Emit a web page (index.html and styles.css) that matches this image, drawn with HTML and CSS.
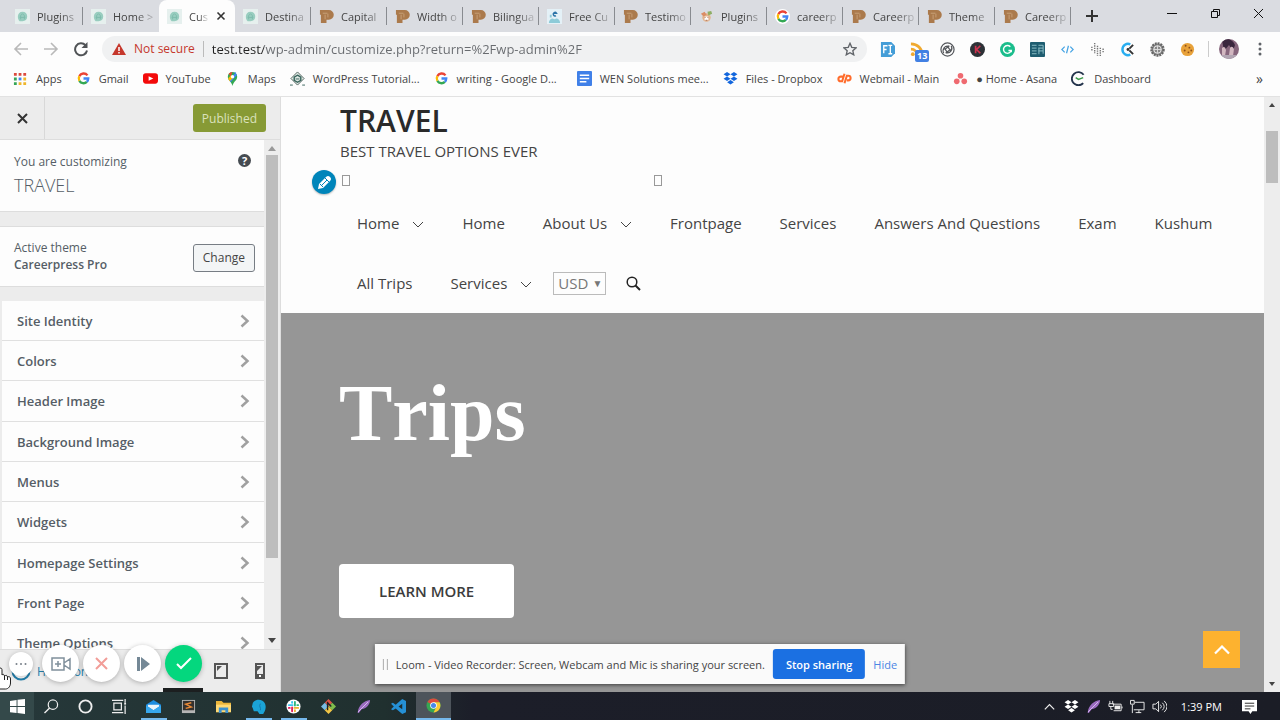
FILE: index.html
```html
<!DOCTYPE html>
<html lang="en">
<head>
<meta charset="utf-8">
<meta name="viewport" content="width=device-width, initial-scale=1">
<title>Customize: TRAVEL</title>
<link rel="stylesheet" href="styles.css">
</head>
<body>
<svg class="defs" aria-hidden="true">
  <symbol id="leaf" viewBox="0 0 16 16"><path fill="#e6f0ee" d="M0 0h16v16H0z"/><path fill="#98cdbf" d="M8 3c3 0 5 2 5 5 0 3-2 5-5 5H5C2 11 2 3 8 3z"/><path stroke="#7dbcac" fill="none" d="M6 11V7l2-2 2 2v4M5 9h6"/></symbol>
  <symbol id="press" viewBox="0 0 16 16"><path fill="#ab7a4c" d="M1 1h9.500a5 5 0 0 1 0 10.500H8V15H2V6H1z"/><path fill="none" stroke="#c9a17a" d="M4 4.500h5M6.500 6v5M9.500 5v4"/></symbol>
  <symbol id="google" viewBox="-1.500 -1.500 19 19"><g fill="none" stroke-width="3"><path stroke="#ea4335" d="M13 4A6 6 0 0 0 2.800 5"/><path stroke="#fbbc05" d="M2.800 5a6 6 0 0 0 0 6"/><path stroke="#34a853" d="M2.800 11a6 6 0 0 0 9.400 1.300"/><path stroke="#4285f4" d="M12.200 12.300A6 6 0 0 0 14 8H8"/></g></symbol>
  <symbol id="dropbox" viewBox="0 0 16 16"><path d="M4.300 1 8 3.400 4.300 5.800.6 3.400zM11.700 1l3.700 2.400-3.700 2.400L8 3.400zM4.300 5.800 8 8.200l-3.700 2.400L.6 8.200zM11.700 5.800l3.700 2.400-3.700 2.400L8 8.200zM8 9.600l3.600 2.400L8 14.400 4.400 12z"/></symbol>
  <symbol id="feather" viewBox="0 0 16 16"><path fill="#9b6cc0" d="M2 13C3 7 8 2 15 1c0 4-3 9-9 10l-3 4-1 0z"/><path stroke="#d9bdf0" d="M2 14 13 3"/></symbol>
  <symbol id="next" viewBox="0 0 12 16"><path fill="none" stroke="#a0a0a0" stroke-width="2.500" d="m2.500 2.500 6 5.500-6 5.500"/></symbol>
  <symbol id="down" viewBox="0 0 12 12"><path fill="none" stroke="#444" d="m1 5 5 5 5-5"/></symbol>
</svg>
<div class="screen">
  <header class="browser">
    <div class="tabstrip">
      <div class="tabs">
        <button class="tab"><svg class="fav"><use href="#leaf"/></svg><span>Plugins</span></button>
        <button class="tab plain"><svg class="fav"><use href="#leaf"/></svg><span>Home &gt;</span></button>
        <button class="tab active"><svg class="fav"><use href="#leaf"/></svg><span>Cus</span><svg class="close" viewBox="0 0 10 10"><path stroke="#333" stroke-width="1.600" d="m1.500 1.500 7 7m0-7-7 7"/></svg></button>
        <button class="tab"><svg class="fav"><use href="#leaf"/></svg><span>Destina</span></button>
        <button class="tab"><svg class="fav"><use href="#press"/></svg><span>Capital</span></button>
        <button class="tab"><svg class="fav"><use href="#press"/></svg><span>Width o</span></button>
        <button class="tab"><svg class="fav"><use href="#press"/></svg><span>Bilingua</span></button>
        <button class="tab"><svg class="fav" viewBox="0 0 16 16"><path fill="#e4f1f7" d="M0 0h16v16H0z"/><path fill="none" stroke="#2b74a8" stroke-width="1.600" d="M6.500 4.500H10a1.800 1.800 0 1 0-.5 2.500"/><path fill="#8ecbd8" d="M2 15c0-3 2-5 4-5l2 1 2-1c2 0 4 2 4 5zM3 6h2v3H3z"/></svg><span>Free Cu</span></button>
        <button class="tab"><svg class="fav"><use href="#press"/></svg><span>Testimo</span></button>
        <button class="tab"><svg class="fav" viewBox="0 0 16 16"><circle cx="8" cy="9" r="4.500" fill="#e3b48c"/><path fill="#db8d65" d="m2 5 4-2 2 3-3 2z"/><path fill="#8dae63" d="m9 3 4-1 1 3-4 2z"/><path fill="#fff" d="M6 8h4v4H6z"/><path stroke="#a86c53" d="M6 9h1m2 0h1m-3 3h2"/></svg><span>Plugins</span></button>
        <button class="tab"><svg class="fav round"><use href="#google"/></svg><span>careerp</span></button>
        <button class="tab"><svg class="fav"><use href="#press"/></svg><span>Careerp</span></button>
        <button class="tab"><svg class="fav"><use href="#press"/></svg><span>Theme</span></button>
        <button class="tab"><svg class="fav"><use href="#press"/></svg><span>Careerp</span></button>
      </div>
      <button class="newtab" aria-label="New tab"><svg width="12" height="12" viewBox="0 0 12 12"><path stroke="#333" stroke-width="2" d="M6 0v12M0 6h12"/></svg></button>
      <div class="window">
        <button aria-label="Minimize"><svg width="11" height="11" viewBox="0 0 11 11"><path stroke="#111" d="M0 5.500h10"/></svg></button>
        <button aria-label="Restore"><svg width="11" height="11" viewBox="0 0 11 11"><path fill="none" stroke="#111" d="M1.500 3.500h6v6h-6zM3.500 3.500v-2h6v6h-2"/></svg></button>
        <button aria-label="Close"><svg width="11" height="11" viewBox="0 0 11 11"><path stroke="#111" d="m1 1 9 9m0-9-9 9"/></svg></button>
      </div>
    </div>
    <div class="toolbar">
      <div class="history">
        <button aria-label="Back"><svg width="16" height="16" viewBox="0 0 16 16"><path fill="none" stroke="#b9b9b9" stroke-width="1.600" d="M15 8H2m6-6L2 8l6 6"/></svg></button>
        <button aria-label="Forward"><svg width="16" height="16" viewBox="0 0 16 16"><path fill="none" stroke="#b9b9b9" stroke-width="1.600" d="M1 8h13M8 2l6 6-6 6"/></svg></button>
        <button aria-label="Reload"><svg width="16" height="16" viewBox="0 0 16 16"><path fill="none" stroke="#505356" stroke-width="2" d="M12.500 4.200A6 6 0 1 0 14 9.500"/><path fill="#505356" d="M14.500 1v6h-6z"/></svg></button>
      </div>
      <div class="address">
        <svg width="14" height="14" viewBox="0 0 14 14"><path fill="#c5372c" d="m7 1 7 12H0z"/><path stroke="#fff" stroke-width="1.500" d="M7 5v4m0 1v1.500"/></svg>
        <span class="unsafe">Not secure</span>
        <input class="url" aria-label="Address" value="test.test/wp-admin/customize.php?return=%2Fwp-admin%2F">
        <svg width="14" height="14" viewBox="0 0 16 16"><path fill="none" stroke="#5f6368" stroke-width="1.500" d="m8 1.500 2 4.600 5 .5-3.800 3.300 1.100 4.800L8 12.200l-4.300 2.500 1.100-4.800L1 6.600l5-.5z"/></svg>
      </div>
      <div class="extensions">
        <button aria-label="Font identifier"><svg viewBox="0 0 16 16"><path fill="#449dd7" d="M1 0h11l4 4v8l-4 4H1z"/><path fill="none" stroke="#fff" stroke-width="1.400" d="M4 12V4h4M4 8h3M9 3.500h4M9 12.500h4M11 3.500v9"/></svg></button>
        <button class="feed" aria-label="Feeds, 13 new"><svg viewBox="0 0 16 16"><g fill="none" stroke="#f0a92f" stroke-width="3"><path d="M1 2c7 0 12 5 12 12M1 7.500c4 0 6.500 3 6.500 6.500"/></g><circle cx="3" cy="13" r="2" fill="#f0a92f"/></svg><b>13</b></button>
        <button aria-label="Knot"><svg viewBox="0 0 16 16"><g fill="none" stroke="#55585c" stroke-width="1.300"><circle cx="8" cy="8" r="7"/><path d="M4 12c-2-4 1-9 6-7M12 4c2 4-1 9-6 7M5 8l5-4M6 12l5-4M8 5l4 5M4 6l4 5"/></g></svg></button>
        <button aria-label="Keywords"><svg viewBox="0 0 16 16"><circle cx="8" cy="8" r="8" fill="#2d3136"/><path stroke="#cf3350" stroke-width="1.800" fill="none" d="M6 4v8m5-8L7 8l4 4"/></svg></button>
        <button aria-label="Grammar"><svg viewBox="0 0 16 16"><circle cx="8" cy="8" r="8" fill="#1bbd8c"/><path fill="none" stroke="#fff" stroke-width="1.500" d="M11 5a4.200 4.200 0 1 0 1 4H9m3 0v2"/></svg></button>
        <button aria-label="Reader"><svg viewBox="0 0 16 16"><rect width="16" height="16" rx="1" fill="#1f5d70"/><path fill="none" stroke="#8fc1c9" d="M2 3.500h5M2 6.500h5M2 9.500h5M2 12.500h5M9 3.500h5v9M9 6.500h5M9 9.500h5M9.500 6v7"/></svg></button>
        <button aria-label="Source"><svg viewBox="0 0 16 16"><path fill="none" stroke="#46a4e4" stroke-width="1.300" d="M5 5 2 8l3 3m6-6 3 3-3 3M9 4l-2 8"/></svg></button>
        <button aria-label="Page dots"><svg viewBox="0 0 16 16"><g stroke="#777" stroke-width="1.500" stroke-dasharray="1.500 1"><path d="M2 5v5M5 1v11M8 4v11M11 6v9M14 7v5"/></g></svg></button>
        <button aria-label="Clock"><svg viewBox="0 0 16 16"><path fill="none" stroke="#2aaef0" stroke-width="2.600" d="M11 2.500A6 6 0 1 0 11 13.500"/><circle cx="8.500" cy="8" r="1.500" fill="#333"/><path stroke="#333" stroke-width="2" d="m10 7 4-4m-4 6 4 4"/></svg></button>
        <button aria-label="Settings"><svg viewBox="0 0 16 16"><circle cx="8" cy="8" r="6.500" fill="#888" stroke="#666" stroke-width="2.500" stroke-dasharray="2 1"/><circle cx="8" cy="8" r="4" fill="none" stroke="#eee"/><path stroke="#ddd" d="M8 4v8M4 8h8"/></svg></button>
        <button aria-label="Cookies"><svg viewBox="0 0 16 16"><circle cx="8" cy="8" r="7" fill="#e8a23a"/><g fill="#8c4d1a"><circle cx="6" cy="4" r="1"/><circle cx="10" cy="6" r="1"/><circle cx="5" cy="9" r="1"/><circle cx="9" cy="11" r="1"/><circle cx="12" cy="9" r="1"/></g></svg></button>
      </div>
      <div class="profile">
        <button aria-label="Profile"><svg width="20" height="20" viewBox="0 0 20 20"><clipPath id="face"><circle cx="10" cy="10" r="10"/></clipPath><g clip-path="url(#face)"><path fill="#86657c" d="M0 0h20v20H0z"/><path fill="#39263d" d="M3 1c5-3 11 0 13 5l-2 6-4-6-5 6z"/><path fill="#d2b7c0" d="M3 9q3-3 4 2l-1 6H3zM11 9q2-3 4 1l-1 7-4-1z"/><path fill="#b1a5b2" d="M0 16h20v4H0z"/></g></svg></button>
        <button aria-label="Menu"><svg width="4" height="16" viewBox="0 0 4 16"><g fill="#5f6368"><circle cx="2" cy="3" r="1.500"/><circle cx="2" cy="8" r="1.500"/><circle cx="2" cy="13" r="1.500"/></g></svg></button>
      </div>
    </div>
    <nav class="bookmarks">
      <a href="#"><svg viewBox="0 0 16 16"><path fill="#dc4a3d" d="M1 2h3v3H1zM6 2h3v3H6zM11 2h3v3h-3z"/><path fill="#35a556" d="M1 7h3v3H1zM1 12h3v3H1z"/><path fill="#4285e8" d="M6 7h3v3H6z"/><path fill="#efb62b" d="M11 7h3v3h-3zM6 12h3v3H6zM11 12h3v3h-3z"/></svg>Apps</a>
      <a href="#"><svg><use href="#google"/></svg>Gmail</a>
      <a href="#"><svg viewBox="0 0 16 16"><rect y="2.500" width="16" height="11" rx="3" fill="#f30a0a"/><path fill="#fff" d="m6 5.500 5 2.500-5 2.500z"/></svg>YouTube</a>
      <a href="#"><svg viewBox="0 0 16 16"><path fill="#34a853" d="M3 6a5 5 0 0 1 10 0c0 4-4 5-5 10-1-5-5-6-5-10z"/><path fill="#4285f4" d="M8 1a5 5 0 0 1 4.700 3.300L6 12 4 9l8-8z"/><path fill="#ea4335" d="M4 3a5 5 0 0 1 4-2L6 6z"/><path fill="#fbbc05" d="m3.300 8 3-3.500L9 7l-4 4z"/><circle cx="8" cy="6" r="1.800" fill="#fff"/></svg>Maps</a>
      <a href="#"><svg viewBox="0 0 16 16"><path fill="#dfe9e4" stroke="#50615c" d="m8 1 7 7-7 7-7-7z"/><path fill="none" stroke="#37635b" stroke-width="1.500" d="m8 4.500 3.500 2v3.500L8 12l-3.500-2V6.500z"/><path stroke="#37635b" d="M6 8.500h4M0 15h3m10 0h3"/></svg>WordPress Tutorial...</a>
      <a href="#" class="wide"><svg><use href="#google"/></svg>writing - Google D...</a>
      <a href="#"><svg viewBox="0 0 16 16"><rect width="16" height="16" rx="1" fill="#4080e8"/><path stroke="#fff" stroke-width="1.600" d="M3 4.500h10M3 8h10M3 11.500h7"/></svg>WEN Solutions mee...</a>
      <a href="#"><svg class="blue"><use href="#dropbox"/></svg>Files - Dropbox</a>
      <a href="#"><svg viewBox="0 0 16 16"><path fill="none" stroke="#ff6c2c" stroke-width="2.200" d="M6.500 6H4a2.500 2.500 0 0 0 0 5h1.500L8 3M8 13l2.500-8H12a2.500 2.500 0 0 1 0 5h-1.500"/></svg>Webmail - Main</a>
      <a href="#"><svg viewBox="0 0 16 16"><g fill="#ef6a70"><circle cx="8" cy="5" r="3"/><circle cx="4" cy="11" r="3"/><circle cx="12" cy="11" r="3"/></g></svg>● Home - Asana</a>
      <a href="#"><svg viewBox="0 0 16 16"><path fill="none" stroke="#24344c" stroke-width="2" d="M13.500 4A7 7 0 1 0 13 13"/><path fill="none" stroke="#3d9a4a" stroke-width="1.500" d="m5 7 3 2 5-2"/></svg>Dashboard</a>
      <button class="more" aria-label="More bookmarks">»</button>
    </nav>
  </header>

  <main class="work">
    <aside class="customizer">
      <div class="head">
        <button class="exit" aria-label="Close"><svg width="11" height="11" viewBox="0 0 11 11"><path stroke="#333" stroke-width="2" d="m1 1 9 9m0-9-9 9"/></svg></button>
        <button class="published">Published</button>
      </div>
      <div class="pane">
        <div class="panels">
          <section class="intro">
            <div><p>You are customizing</p><h2>TRAVEL</h2></div>
            <button class="help" aria-label="Help">?</button>
          </section>
          <section class="theme">
            <div><p>Active theme</p><h3>Careerpress Pro</h3></div>
            <button class="change">Change</button>
          </section>
          <div class="sections">
            <button>Site Identity<svg><use href="#next"/></svg></button>
            <button>Colors<svg><use href="#next"/></svg></button>
            <button>Header Image<svg><use href="#next"/></svg></button>
            <button>Background Image<svg><use href="#next"/></svg></button>
            <button>Menus<svg><use href="#next"/></svg></button>
            <button>Widgets<svg><use href="#next"/></svg></button>
            <button>Homepage Settings<svg><use href="#next"/></svg></button>
            <button>Front Page<svg><use href="#next"/></svg></button>
            <button>Theme Options<svg><use href="#next"/></svg></button>
          </div>
        </div>
        <div class="scroll dim"><svg width="8" height="5" viewBox="0 0 8 5"><path fill="#999" d="M4 0 8 5H0z"/></svg><i></i><svg width="8" height="5" viewBox="0 0 8 5"><path fill="#444" d="m4 5 4-5H0z"/></svg></div>
      </div>
      <div class="foot">
        <button class="collapse"><svg width="20" height="20" viewBox="0 0 20 20"><circle cx="10" cy="10" r="8.500" fill="#fff" stroke="#2480ad" stroke-width="2"/><path fill="#0b6799" d="M5 10h10l-2 4H7z"/></svg>Hide Controls</button>
        <div class="devices">
          <button aria-label="Tablet"><svg width="14" height="16" viewBox="0 0 14 16"><path fill="none" stroke="#555" stroke-width="2" d="M1 1h12v14H1z"/><path fill="#555" d="M3 3h5L3 8z"/></svg></button>
          <button aria-label="Mobile"><svg width="10" height="16" viewBox="0 0 10 16"><path fill="none" stroke="#555" stroke-width="2" d="M1 1h8v14H1z"/><path fill="#555" d="M2 3h5L2 8zM1 11h8v4H1z"/><path fill="#fff" d="M4 12h2v2H4z"/></svg></button>
        </div>
      </div>
      <div class="recorder">
        <button class="dots" aria-label="Options"><svg width="12" height="4" viewBox="0 0 12 4"><g fill="#777f88"><circle cx="1.500" cy="2" r="1"/><circle cx="6" cy="2" r="1"/><circle cx="10.500" cy="2" r="1"/></g></svg></button>
        <button aria-label="Camera"><svg width="20" height="14" viewBox="0 0 20 14"><path fill="none" stroke="#80909c" stroke-width="1.500" d="M1 1h12v12H1zM13 6l6-4v10l-6-4M4 7h6M7 4v6"/></svg></button>
        <button aria-label="Cancel"><svg width="13" height="13" viewBox="0 0 13 13"><path stroke="#f29d98" stroke-width="2" d="m1 1 11 11m0-11L1 12"/></svg></button>
        <button aria-label="Resume"><svg width="14" height="14" viewBox="0 0 14 14"><path fill="#748896" d="M1 0h3v14H1zM5 0l9 7-9 7z"/></svg></button>
        <button class="done" aria-label="Finish"><svg width="16" height="13" viewBox="0 0 16 13"><path fill="none" stroke="#fff" stroke-width="2" d="m1 7 4 4L15 1"/></svg></button>
      </div>
      <div class="tip"></div>
      <svg class="hand" viewBox="0 0 12 23"><path fill="#fff" stroke="#222" d="M0 1c2 0 2 1 2 3v4c1-1 2-1 2.500 1C6 8 7 8 7.500 10c2-1 3 0 3 2v4c0 3-2 6-5 6H0"/><path stroke="#222" d="M4.500 9v4M7.500 10v3"/></svg>
    </aside>

    <div class="preview">
      <div class="site">
        <header class="masthead">
          <h1>TRAVEL</h1>
          <p>BEST TRAVEL OPTIONS EVER</p>
          <div class="social"><i></i><i></i>
            <button class="edit" aria-label="Edit menu"><svg width="15" height="15" viewBox="0 0 15 15"><path fill="#fff" d="m1 14 1-5 7-7q2-2 4 0t0 4l-7 7z"/><path stroke="#0085ba" fill="none" d="m8 3 4 4M3 9l3 3M5 10l5-5"/></svg></button>
          </div>
          <nav class="menu">
            <a href="#">Home<svg><use href="#down"/></svg></a>
            <a href="#">Home</a>
            <a href="#">About Us<svg><use href="#down"/></svg></a>
            <a href="#">Frontpage</a>
            <a href="#">Services</a>
            <a href="#">Answers And Questions</a>
            <a href="#">Exam</a>
            <a href="#">Kushum</a>
            <a href="#">All Trips</a>
            <a href="#">Services<svg><use href="#down"/></svg></a>
            <div class="tools">
              <div class="currency"><select aria-label="Currency"><option>USD</option></select></div>
              <button aria-label="Search"><svg width="15" height="15" viewBox="0 0 15 15"><circle cx="6" cy="6" r="4.800" fill="none" stroke="#222" stroke-width="1.500"/><path stroke="#222" stroke-width="2" d="m9.500 9.500 4.500 4.500"/></svg></button>
            </div>
          </nav>
        </header>
        <section class="hero">
          <h2>Trips</h2>
          <a class="learn" href="#">LEARN MORE</a>
        </section>
        <button class="top" aria-label="Back to top"><svg width="16" height="10" viewBox="0 0 16 10"><path fill="none" stroke="#fff" stroke-width="2.200" d="m1 8.500 7-7 7 7"/></svg></button>
      </div>
      <div class="scroll page"><svg width="6" height="4" viewBox="0 0 6 4"><path fill="#444" d="m3 0 3 4H0z"/></svg><i></i><svg width="6" height="4" viewBox="0 0 6 4"><path fill="#444" d="m3 4 3-4H0z"/></svg></div>
    </div>
    <div class="sharing">
      <span class="grip"></span>
      <p>Loom - Video Recorder: Screen, Webcam and Mic is sharing your screen.</p>
      <button class="stop">Stop sharing</button>
      <a href="#">Hide</a>
    </div>
  </main>

  <footer class="taskbar">
    <div class="apps">
      <button class="sys start" aria-label="Start"><svg viewBox="0 0 16 16"><path fill="#fff" d="m0 2 7-1v6.500H0zM8 .9 16 0v7.500H8zM0 8.500h7V15l-7-1zM8 8.500h8V16l-8-1z"/></svg></button>
      <button class="sys" aria-label="Search"><svg viewBox="0 0 16 16"><circle cx="9.500" cy="6" r="5" fill="none" stroke="#eee" stroke-width="1.300"/><path stroke="#eee" stroke-width="1.500" d="M6 9.500.5 15"/></svg></button>
      <button class="sys" aria-label="Cortana"><svg viewBox="0 0 16 16"><circle cx="8" cy="8" r="6.500" fill="none" stroke="#eee" stroke-width="2"/></svg></button>
      <button class="sys" aria-label="Task view"><svg viewBox="0 0 16 16"><path fill="none" stroke="#eee" stroke-width="1.300" d="M2 4.500h8v7H2zM0 1.500h12M0 14.500h12M14 0v4m0 3v9"/><path fill="#eee" d="M13 4h2v2h-2z"/></svg></button>
      <button class="open" aria-label="Mail"><svg viewBox="0 0 16 16"><path fill="#1c8de0" d="M0 6 8 1l8 5v9H0z"/><path fill="#e9f4fb" d="M2 6h12v2l-6 4-6-4z"/><path fill="#37a7ee" d="m0 7 8 5 8-5v8H0z"/></svg></button>
      <button aria-label="Sublime"><svg viewBox="0 0 16 16"><path fill="#b5b5b5" d="M1 1h14v14H1z"/><path fill="#35312e" d="M2 2h12v10H2z"/><path fill="none" stroke="#eb8b37" stroke-width="1.500" d="M11 4 5 5.500l6 3L5 10"/></svg></button>
      <button aria-label="Files"><svg viewBox="0 0 16 16"><path fill="#eab53b" d="M0 2h6l2 2h8v10H0z"/><path fill="#ffd974" d="M0 6h16v8H0z"/><path fill="#3c91cf" d="M3 9h10v6h-3v-3H6v3H3z"/></svg></button>
      <button class="open" aria-label="Local"><svg viewBox="0 0 16 16"><path fill="#1ba3d6" d="M2 4c3-5 11-4 13 1 2 5-1 9-2 11H9l-2-3H3l-1-3-1-2z"/><path stroke="#1276ac" fill="none" d="M10 5c-2 3 1 4 0 7"/></svg></button>
      <button class="open" aria-label="Slack"><svg viewBox="0 0 16 16"><circle cx="8" cy="8" r="7.500" fill="#fff"/><g stroke-width="2" stroke-linecap="round"><path stroke="#36c5f0" d="M3 6.500h4M6.500 3v1"/><path stroke="#2eb67d" d="M9.500 3v4M12 6.500h1"/><path stroke="#ecb22e" d="M9 9.500h4M9.500 12v1"/><path stroke="#e01e5a" d="M6.500 9v4M3 9.500h1"/></g></svg></button>
      <button aria-label="Git"><svg viewBox="0 0 16 16"><path fill="#de5449" d="m8 0 4 4-4 4-4-4z"/><path fill="#78bce4" d="m4 4 4 4-4 4-4-4z"/><path fill="#80bd4c" d="m12 4 4 4-4 4-4-4z"/><path fill="#f3c746" d="m8 8 4 4-4 4-4-4z"/><path stroke="#222" stroke-width="1.500" d="M7 3v9m0-8 4 4"/></svg></button>
      <button aria-label="Feather"><svg><use href="#feather"/></svg></button>
      <button aria-label="Code"><svg viewBox="0 0 16 16"><path fill="#2590d6" d="m12 0 4 2v12l-4 2-7-6-3 2-2-1 3-3-3-3 2-1 3 2zm0 5L8 8l4 3z"/></svg></button>
      <button class="current" aria-label="Chrome"><svg viewBox="0 0 16 16"><circle cx="8" cy="8" r="7.500" fill="#37a653"/><path fill="#dd4b3d" d="M8 8 1.500 4.200A7.500 7.500 0 0 1 14.500 4.500H8z"/><path fill="#fbc934" d="M8 4.500h6.500A7.500 7.500 0 0 1 8 15.500l3-6z"/><circle cx="8" cy="8" r="3.500" fill="#fff"/><circle cx="8" cy="8" r="2.700" fill="#4587eb"/></svg></button>
    </div>
    <div class="tray">
      <svg viewBox="0 0 16 16"><path fill="none" stroke="#eee" stroke-width="1.300" d="m3 11 5-5 5 5"/></svg>
      <svg class="white"><use href="#dropbox"/></svg>
      <svg><use href="#feather"/></svg>
      <svg viewBox="0 0 16 16"><path fill="none" stroke="#eee" d="M5 5.500h9v7H6M2 2v3m3-3v3M1 5h5v3H1zM3 8v3h2M15 8v2"/><path fill="#eee" d="M7 7h6v4H7z"/></svg>
      <svg viewBox="0 0 16 16"><path fill="none" stroke="#eee" d="M5 3.500h10v8H4M9.500 12v3M6 14.500h6M.5 1.500h4v4h-4zM2.500 6v9"/></svg>
      <svg viewBox="0 0 16 16"><path fill="none" stroke="#eee" d="M1 5.500h3l3-3v11l-3-3H1zM9 6q2 2 0 4M11 4q4 4 0 8M13 2q6 6 0 12"/></svg>
      <time>1:39 PM</time>
      <svg viewBox="0 0 16 16"><path fill="#fff" d="M0 1h16v12h-5l-2 3-2-3H0z"/><path stroke="#222" d="M3 4.500h10M3 7.500h10M3 10.500h6"/></svg>
    </div>
  </footer>
</div>
</body>
</html>
```
FILE: styles.css
```css
* { box-sizing: border-box; }
body, p, h1, h2, h3 { margin: 0; font-weight: 400; }
body { font-family: "Open Sans", "Noto Sans", sans-serif; font-size: 12px; color: #555d66; }
button { font: inherit; color: inherit; background: none; border: 0; padding: 0; display: flex; align-items: center; justify-content: center; }
a { color: inherit; text-decoration: none; }
svg { display: block; flex: none; }
.defs { position: absolute; width: 0; height: 0; }
.screen { height: 100vh; display: flex; flex-direction: column; overflow: hidden; }

.browser { background: #fdfdfd; border-bottom: 1px solid #e2e2e2; color: #444; font-size: 11px; }
.tabstrip { display: flex; align-items: stretch; height: 32px; background: #dadce1; padding-left: 7px; }
.tabs { display: flex; }
.tab { width: 76px; padding: 0 0 0 8px; gap: 7px; justify-content: flex-start; position: relative; }
.tab span { flex: 1; white-space: nowrap; text-align: left; mask-image: linear-gradient(90deg, #000 50%, #0003 90%); }
.tab::after { content: ""; position: absolute; right: 0; top: 7px; height: 18px; border-right: 1px solid #888b90; }
.tab.plain::after, .tab.active::after { display: none; }
.tab.active { background: #fdfdfd; border-radius: 8px 8px 0 0; padding-right: 9px; }
.fav { width: 15px; height: 15px; }
.round { background: #fff; border-radius: 8px; }
.close { width: 10px; height: 10px; }
.newtab { width: 42px; }
.window { margin-left: auto; display: flex; padding-bottom: 5px; }
.window button { width: 43px; }
.toolbar { display: flex; align-items: center; height: 34px; }
.history { display: flex; gap: 14px; padding: 0 13px; }
.address { flex: 1; display: flex; align-items: center; height: 26px; background: #f0f1f2; border-radius: 13px; padding: 0 10px; gap: 8px; }
.unsafe { color: #c5372c; font-size: 12px; border-right: 1px solid #bbb; padding-right: 8px; line-height: 16px; }
.url { flex: 1; min-width: 0; border: 0; padding: 0; outline: 0; font: 13px "Open Sans", sans-serif; color: transparent; background: linear-gradient(90deg, #222 52px, #686b6f 52px); background-clip: text; }
.extensions { display: flex; padding: 0 6px 0 5px; border-right: 1px solid #ccc; height: 16px; }
.extensions button { width: 30px; position: relative; }
.extensions svg { width: 15px; height: 15px; }
.feed b { position: absolute; left: 13px; top: 9px; padding: 0 2px; background: #4280e3; color: #fff; border-radius: 2px; font-size: 9px; line-height: 12px; }
.profile { display: flex; gap: 19px; padding: 0 18px 0 10px; }
.bookmarks { display: flex; align-items: center; gap: 14px; height: 30px; padding: 0 17px 6px 13px; white-space: nowrap; }
.bookmarks a { display: flex; align-items: center; gap: 8px; }
.bookmarks .wide { padding-right: 6px; }
.bookmarks svg { width: 15px; height: 15px; }
.blue { fill: #1266dd; }
.white { fill: #fff; }
.more { margin-left: auto; font-size: 14px; }

.work { flex: 1; min-height: 0; display: flex; position: relative; }
.customizer { width: 281px; flex: none; display: flex; flex-direction: column; background: #ececec; border-right: 1px solid #ddd; position: relative; }
.head { display: flex; justify-content: space-between; align-items: center; height: 43px; flex: none; border-bottom: 1px solid #ddd; padding-right: 14px; }
.exit { width: 45px; height: 42px; border-right: 1px solid #d8d8d8; }
.published { background: #879a35; color: #dbe2bd; border-radius: 3px; height: 28px; padding: 0 9px; }
.pane { flex: 1; min-height: 0; display: flex; }
.panels { flex: 1; overflow: hidden; }
.intro, .theme { display: flex; justify-content: space-between; background: #fdfdfd; border-bottom: 1px solid #ddd; }
.intro { padding: 14px 13px 12px 14px; height: 72px; line-height: 16px; }
.intro h2 { font-size: 18px; font-weight: 300; line-height: 24px; margin-top: 3px; }
.help { width: 13px; height: 13px; border-radius: 7px; background: #454b51; color: #fff; font-size: 11px; font-weight: 700; }
.theme { margin: 14px 0; border-top: 1px solid #ddd; padding: 0 9px 2px 14px; height: 61px; align-items: center; line-height: 17px; }
.theme h3 { font-size: 12px; font-weight: 600; }
.change { border: 1px solid #777d84; border-radius: 3px; height: 28px; padding: 0 9px; margin-top: 4px; background: #f3f5f6; color: #444; }
.sections { margin-left: 2px; background: #fdfdfd; }
.sections button { width: 100%; height: 40px; justify-content: space-between; padding: 0 13px 0 15px; font-size: 13px; font-weight: 600; border-bottom: 1px solid #e0e0e0; }
.sections button:nth-child(3n) { height: 41px; }
.sections svg { width: 12px; height: 16px; }
.scroll { flex: none; width: 16px; background: #ededed; display: flex; flex-direction: column; align-items: center; padding: 6px 0; }
.scroll i { width: 12px; background: #bdbdbd; }
.scroll svg:last-child { margin-top: auto; }
.dim i { height: 81%; margin-top: 4px; }
.page i { height: 9%; margin-top: 24px; }
.foot { height: 43px; flex: none; border-top: 1px solid #ddd; display: flex; justify-content: space-between; align-items: center; padding: 0 15px 0 11px; }
.collapse { gap: 6px; color: #2480ad; }
.devices { display: flex; gap: 27px; }
.recorder { position: absolute; left: 9px; bottom: 10px; display: flex; align-items: center; gap: 4px; }
.recorder button { width: 37px; height: 37px; border-radius: 50%; background: #fff; box-shadow: 0 1px 5px #0004; }
.recorder .dots { width: 24px; height: 24px; margin-right: 5px; }
.recorder .done { background: #04d77e; }
.tip { position: absolute; left: 163px; bottom: 0; width: 40px; height: 4px; background: #1c1f20; }
.hand { position: absolute; left: 0; bottom: 2px; width: 12px; height: 23px; }

.preview { flex: 1; min-width: 0; display: flex; }
.site { flex: 1; min-width: 0; display: flex; flex-direction: column; position: relative; color: #333; }
.masthead { background: #fdfdfd; padding: 4px 24px 0 57px; }
.masthead h1 { font-size: 30px; font-weight: 600; line-height: 40px; color: #2a2a2a; padding-left: 2px; }
.masthead p { font-size: 15px; line-height: 20px; padding-left: 2px; color: #444; }
.social { position: relative; height: 32px; padding: 14px 0 0 4px; display: flex; gap: 304px; }
.social i { width: 8px; height: 11px; border: 1px solid #999; }
.edit { position: absolute; left: -26px; top: 9px; width: 24px; height: 24px; border-radius: 50%; background: #0085ba; box-shadow: 0 1px 2px #0004; }
.menu { display: flex; flex-wrap: wrap; font-size: 15px; color: #444; }
.menu a { display: flex; align-items: center; gap: 13px; height: 60px; padding: 0 19px; white-space: nowrap; }
.menu a svg { width: 12px; height: 12px; }
.tools { display: flex; align-items: center; gap: 20px; padding-left: 2px; }
.currency { position: relative; color: #777; }
.currency::after { content: "▼"; position: absolute; right: 4px; top: 0; font: 10px/23px "Liberation Sans", sans-serif; pointer-events: none; }
.currency select { appearance: none; font: inherit; color: inherit; background: transparent; width: 53px; height: 23px; border: 1px solid #bbb; border-radius: 0; padding: 0 4px; line-height: 20px; }
.hero { flex: 1; background: #969696; padding: 54px 58px; }
.hero h2 { font: 700 80px/92px "Liberation Serif", serif; font-kerning: none; color: #fff; }
.learn { display: inline-block; margin-top: 105px; background: #fff; color: #3c3c3c; font-size: 15px; font-weight: 600; line-height: 54px; padding: 0 40px; border-radius: 4px; }
.top { position: absolute; right: 24px; bottom: 24px; width: 37px; height: 37px; background: #fdb22f; }
.sharing { position: absolute; left: 50%; bottom: 8px; transform: translateX(-50%); display: flex; align-items: center; white-space: nowrap; height: 40px; background: #fafafa; box-shadow: 0 1px 4px #0009; padding: 0 8px; gap: 8px; font-size: 11px; color: #444; }
.grip { width: 5px; height: 11px; border: solid #aaa; border-width: 0 1px; }
.stop { background: #1b70e2; color: #fff; font-weight: 600; border-radius: 3px; height: 30px; padding: 0 13px; }
.sharing a { color: #4b85e4; }

.taskbar { height: 28px; flex: none; display: flex; justify-content: space-between; background: linear-gradient(90deg, #26383a 0, #20302f 30%, #1c1e29 37%, #1b1d26 100%); color: #fff; }
.apps, .tray { display: flex; align-items: center; }
.apps button { width: 35px; height: 28px; position: relative; }
.apps .sys { width: 34px; }
.apps .start { background: #34494a; }
.apps svg, .tray svg { width: 15px; height: 15px; }
.open::after { content: ""; position: absolute; left: 5px; right: 4px; bottom: 0; height: 2px; background: #76b9ed; }
.apps .current { background: #4d545b; border-bottom: 2px solid #76b9ed; }
.tray { gap: 7px; padding-right: 23px; font-size: 11px; }
.tray time { margin: 0 13px 0 7px; }
```
